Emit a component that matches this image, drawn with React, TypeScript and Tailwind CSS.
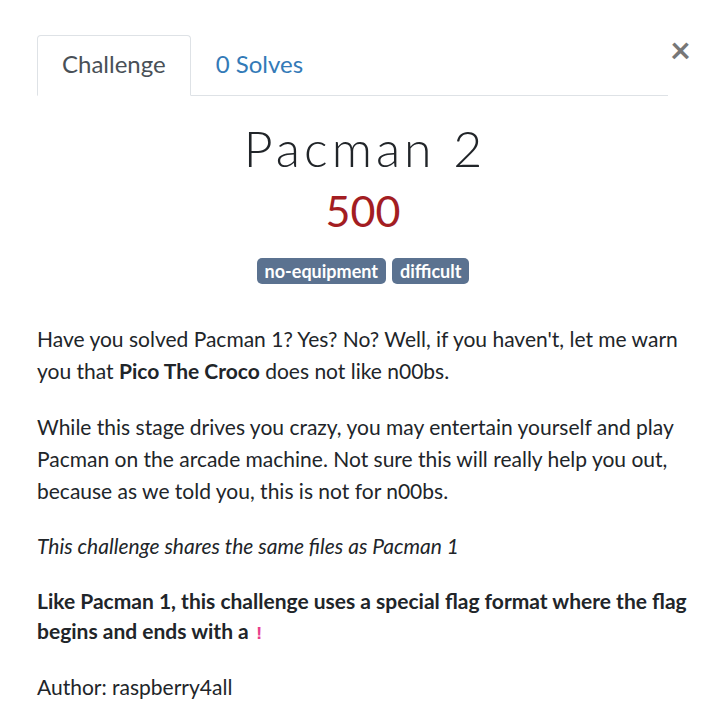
import { useState } from "react";

const TAGS = ["no-equipment", "difficult"];

export default function App() {
	const [tab, setTab] = useState<"challenge" | "solves">("challenge");

	return (
		<div className="min-h-[728px] w-[718px] bg-white font-['Lato',sans-serif] text-[#212529]">
			<div className="pl-[37px] pr-[29px] pt-[35px]">
				<div className="flex items-start">
					<ul className="flex flex-1 border-b border-[#dee2e6]">
						<li
							className={
								tab === "challenge"
									? "-mb-px rounded-t border border-[#dee2e6] border-b-white bg-white px-[24px] pt-[13px] pb-[17px] text-[24px] leading-[29px] text-[#495057]"
									: "-mb-px border border-transparent px-[24px] pt-[13px] pb-[17px] text-[24px] leading-[29px] text-[#337ab7]"
							}
							onClick={() => setTab("challenge")}
						>
							Challenge
						</li>
						<li
							className={
								tab === "solves"
									? "-mb-px rounded-t border border-[#dee2e6] border-b-white bg-white px-[24px] pt-[13px] pb-[17px] text-[24px] leading-[29px] text-[#495057]"
									: "-mb-px border border-transparent px-[24px] pt-[13px] pb-[17px] text-[24px] leading-[29px] text-[#337ab7]"
							}
							onClick={() => setTab("solves")}
						>
							0 Solves
						</li>
					</ul>
					<button className="-mt-[1px] w-[21px] pl-[2px] text-right text-[36px] font-bold leading-[30px] text-[#777]">
						×
					</button>
				</div>

				<div className="pt-[20px] text-center">
					<h3 className="pl-[4px] text-[50px] font-light leading-[64px] tracking-[4px] text-[#212529]">
						Pacman 2
					</h3>
					<h4 className="mt-[2px] text-[43px] leading-[58px] text-[#a31d22]">500</h4>
					<div className="mt-[18px] flex justify-center gap-[6px]">
						{TAGS.map((tag) => (
							<span
								key={tag}
								className="rounded-[5px] bg-[#5b7290] px-[8px] text-[18px] font-bold leading-[26px] text-white"
							>
								{tag}
							</span>
						))}
					</div>
				</div>

				<div className="mt-[39px] text-[21px] leading-[32px]">
					<p className="mb-[24px]">
						Have you solved Pacman 1? Yes? No? Well, if you haven't, let me warn you that{" "}
						<strong>Pico The Croco</strong> does not like n00bs.
					</p>
					<p className="mb-[23px]">
						While this stage drives you crazy, you may entertain yourself and play Pacman on the
						arcade machine. Not sure this will really help you out, because as we told you, this
						is not for n00bs.
					</p>
					<p className="mb-[24px] italic">This challenge shares the same files as Pacman 1</p>
					<p className="mb-[25px] font-bold leading-[30px]">
						Like Pacman 1, this challenge uses a special flag format where the flag begins and
						ends with a{" "}
						<code className="font-['Liberation_Mono',monospace] text-[18px] leading-none font-bold text-[#e83e8c]">
							!
						</code>
					</p>
					<p>Author: raspberry4all</p>
				</div>
			</div>
		</div>
	);
}
